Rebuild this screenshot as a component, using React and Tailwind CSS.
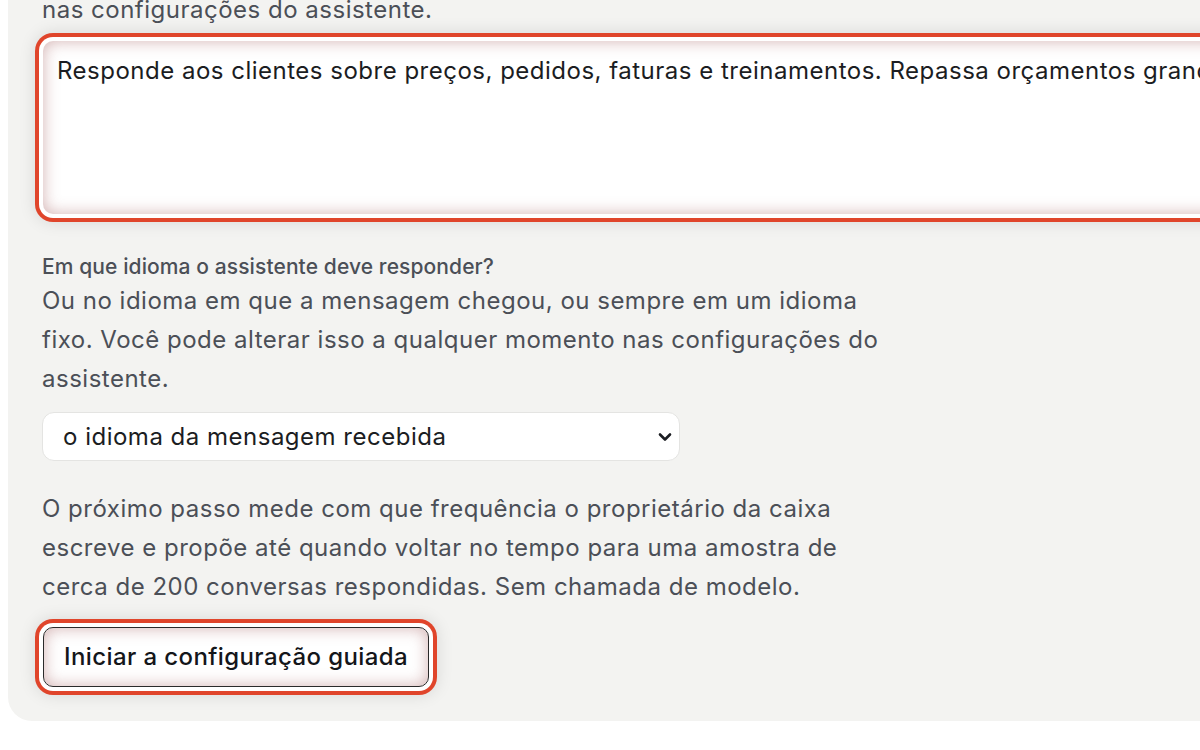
export default function App() {
  return (
    <div className="w-[1200px] h-[750px] overflow-hidden bg-white font-['Inter','Noto_Sans',sans-serif]">
      <div className="ml-[8px] w-[1600px] bg-[#f3f3f1] rounded-bl-[24px] pl-[34px] pb-[34px]">
        <p className="mt-[-10px] text-[24px] leading-[39px] tracking-[0.5px] text-[#4b4f57]">
          nas configurações do assistente.
        </p>
        <div className="mt-[12px]">
          <textarea
            readOnly
            wrap="off"
            defaultValue="Responde aos clientes sobre preços, pedidos, faturas e treinamentos. Repassa orçamentos grandes e reclamações para um atendente humano."
            className="block w-[1500px] h-[173px] ml-[1px] resize-none overflow-hidden rounded-[10px] bg-white pl-[14px] pr-[16px] py-[12px] text-[24px] leading-[36px] tracking-[0.5px] text-[#1b1d22] outline-none shadow-[0_0_0_4px_#fff,0_0_0_8px_#e0452b,0_0_16px_9px_rgba(0,0,0,0.10),inset_0_0_16px_rgba(150,70,70,0.42)]"
          />
        </div>
        <div className="mt-[40px] max-w-[840px]">
          <p className="text-[21px] leading-[26px] font-medium tracking-[0.1px] text-[#4b4f57]">
            Em que idioma o assistente deve responder?
          </p>
          <p className="mt-[1px] text-[24px] leading-[39px] tracking-[0.5px] text-[#4b4f57]">
            Ou no idioma em que a mensagem chegou, ou sempre em um idioma fixo. Você pode alterar isso a qualquer momento nas configurações do assistente.
          </p>
        </div>
        <div className="mt-[14px] w-[638px] h-[49px] flex items-center justify-between rounded-[12px] border border-[#e4e4e2] bg-white pl-[20px] pr-[6px]">
          <span className="text-[24px] tracking-[0.5px] text-[#1b1d22]">o idioma da mensagem recebida</span>
          <svg width="16" height="16" viewBox="0 0 16 16" fill="none">
            <path d="M3 5.5 L8 10.5 L13 5.5" stroke="#1b1d22" strokeWidth="2.6" strokeLinecap="round" strokeLinejoin="round" />
          </svg>
        </div>
        <p className="mt-[28px] max-w-[840px] text-[24px] leading-[39px] tracking-[0.5px] text-[#4b4f57]">
          O próximo passo mede com que frequência o proprietário da caixa escreve e propõe até quando voltar no tempo para uma amostra de cerca de 200 conversas respondidas. Sem chamada de modelo.
        </p>
        <button className="mt-[21px] ml-[1px] h-[60px] px-[20px] rounded-[10px] border-[1.5px] border-[#2a2a2a] bg-white text-[24px] font-medium tracking-[0.4px] text-[#14161a] shadow-[0_0_0_4px_#fff,0_0_0_8px_#e0452b,0_0_16px_9px_rgba(0,0,0,0.10),inset_0_0_16px_rgba(150,70,70,0.42)]">
          Iniciar a configuração guiada
        </button>
      </div>
    </div>
  );
}
